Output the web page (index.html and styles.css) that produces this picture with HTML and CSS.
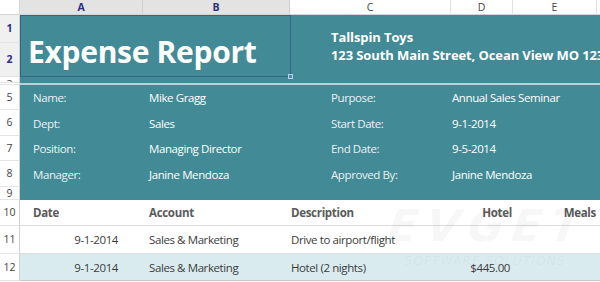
FILE: index.html
```html
<!DOCTYPE html>
<html>
<head>
<meta charset="utf-8">
<link rel="stylesheet" href="styles.css">
</head>
<body>
<div class="sheet">
  <div class="corner"></div>
  <div class="colh sel">A</div>
  <div class="colh sel">B</div>
  <div class="colh">C</div>
  <div class="colh">D</div>
  <div class="colh">E</div>
  <div class="colh end"></div>

  <div class="rowh sel r1">1</div>
  <div class="rowh sel r2">2</div>
  <div class="rowh r3"><span class="cut">3</span></div>
  <div class="rowh r4"></div>
  <div class="rowh r5">5</div>
  <div class="rowh r6">6</div>
  <div class="rowh r7">7</div>
  <div class="rowh r8">8</div>
  <div class="rowh r9">9</div>
  <div class="rowh r10">10</div>
  <div class="rowh r11">11</div>
  <div class="rowh r12">12</div>

  <div class="title">Expense Report</div>
  <div class="company">
    <div class="company-name">Tallspin Toys</div>
    <div class="company-addr">123 South Main Street, Ocean View MO 12345</div>
  </div>
  <div class="selection"><span class="handle"></span></div>

  <div class="band r3"></div>
  <div class="hidden-row"></div>

  <div class="info r5 lab">Name:</div>
  <div class="info r5 val">Mike Gragg</div>
  <div class="info r5 lab2">Purpose:</div>
  <div class="info r5 val2">Annual Sales Seminar</div>

  <div class="info r6 lab">Dept:</div>
  <div class="info r6 val">Sales</div>
  <div class="info r6 lab2">Start Date:</div>
  <div class="info r6 val2">9-1-2014</div>

  <div class="info r7 lab">Position:</div>
  <div class="info r7 val">Managing Director</div>
  <div class="info r7 lab2">End Date:</div>
  <div class="info r7 val2">9-5-2014</div>

  <div class="info r8 lab">Manager:</div>
  <div class="info r8 val">Janine Mendoza</div>
  <div class="info r8 lab2">Approved By:</div>
  <div class="info r8 val2">Janine Mendoza</div>

  <div class="band r9"></div>

  <div class="cell th r10 ca">Date</div>
  <div class="cell th r10 cb">Account</div>
  <div class="cell th r10 cc">Description</div>
  <div class="cell th r10 cd num">Hotel</div>
  <div class="cell th r10 ce num">Meals</div>
  <div class="cell th r10 cf"></div>

  <div class="cell r11 ca num date">9-1-2014</div>
  <div class="cell r11 cb">Sales &amp; Marketing</div>
  <div class="cell r11 cc">Drive to airport/flight</div>
  <div class="cell r11 cd num"></div>
  <div class="cell r11 ce num"></div>
  <div class="cell r11 cf"></div>

  <div class="cell alt r12 ca num date">9-1-2014</div>
  <div class="cell alt r12 cb">Sales &amp; Marketing</div>
  <div class="cell alt r12 cc">Hotel (2 nights)</div>
  <div class="cell alt r12 cd num money">$445.00</div>
  <div class="cell alt r12 ce num"></div>
  <div class="cell alt r12 cf"></div>

  <div class="watermark">
    <div class="wm-big">EVGET</div>
    <div class="wm-small">SOFTWARE SOLUTIONS</div>
  </div>
</div>
</body>
</html>
```

FILE: styles.css
```css
html, body {
  margin: 0;
  padding: 0;
  background: #ffffff;
  overflow: hidden;
}

body {
  font-family: "Open Sans", "Noto Sans", sans-serif;
  width: 600px;
  height: 282px;
}

.sheet {
  position: relative;
  display: grid;
  grid-template-columns: 20px 123px 147px 161px 62px 84px 3px;
  grid-template-rows: 15px 28px 34px 6px 2px 25px 26px 25px 26px 13px 26px 28px 27px;
  width: 600px;
  height: 282px;
  background: #ffffff;
}

.corner {
  grid-row: 1;
  grid-column: 1;
  background: #ffffff;
  border-right: 1px solid #d6d6d6;
  border-bottom: 1px solid #d6d6d6;
}

.colh {
  grid-row: 1;
  display: flex;
  align-items: center;
  justify-content: center;
  font-size: 10.5px;
  color: #444444;
  background: #ffffff;
  border-right: 1px solid #e2e2e2;
  border-bottom: 1px solid #d4d4d4;
  box-sizing: border-box;
  line-height: 1;
}

.colh.sel {
  background: #e3e3e3;
  color: #2d2f86;
  font-weight: 700;
  border-right-color: #d0d0d0;
}

.colh.end {
  border-right: none;
}

.rowh {
  grid-column: 1;
  display: flex;
  align-items: center;
  justify-content: center;
  font-size: 10.5px;
  color: #444444;
  background: #ffffff;
  border-right: 1px solid #d0d0d0;
  border-bottom: 1px solid #e4e4e4;
  box-sizing: border-box;
  overflow: hidden;
  line-height: 1;
}

.rowh.sel {
  background: #f0f0f0;
  color: #2d2f86;
  font-weight: 700;
}

.rowh.r3 { align-items: flex-start; }
.rowh .cut { margin-top: 2px; }

.r1 { grid-row: 2; }
.r2 { grid-row: 3; }
.r3 { grid-row: 4; }
.r4 { grid-row: 5; }
.r5 { grid-row: 6; }
.r6 { grid-row: 7; }
.r7 { grid-row: 8; }
.r8 { grid-row: 9; }
.r9 { grid-row: 10; }
.r10 { grid-row: 11; }
.r11 { grid-row: 12; }
.r12 { grid-row: 13; }

.title {
  grid-row: 2 / 4;
  grid-column: 2 / 4;
  background: #428a96;
  color: #ffffff;
  font-weight: 700;
  font-size: 30px;
  display: flex;
  align-items: flex-end;
  padding: 0 0 10px 8px;
  line-height: 1;
  letter-spacing: -0.3px;
}

.company {
  grid-row: 2 / 4;
  grid-column: 4 / 8;
  background: #428a96;
  color: #ffffff;
  font-weight: 700;
  font-size: 13px;
  line-height: 17.5px;
  padding: 14px 0 0 41px;
  white-space: nowrap;
  overflow: hidden;
  letter-spacing: -0.1px;
}

.selection {
  grid-row: 2 / 4;
  grid-column: 2 / 4;
  border: 1.5px solid #33648d;
  position: relative;
  box-sizing: border-box;
  margin-right: -1px;
}

.handle {
  position: absolute;
  right: -3px;
  bottom: -3px;
  width: 3px;
  height: 3px;
  background: #4f86b3;
  border: 1px solid #b9d3e3;
}

.band {
  grid-column: 2 / 8;
  background: #428a96;
}

.hidden-row {
  grid-row: 5;
  grid-column: 2 / 8;
  background: #b7d2d8;
}

.info {
  background: #428a96;
  color: #ffffff;
  font-size: 11.5px;
  letter-spacing: -0.4px;
  display: flex;
  align-items: center;
  white-space: nowrap;
}

.info.lab {
  grid-column: 2;
  padding-left: 13px;
  color: #eaf2f4;
}

.info.val {
  grid-column: 3;
  padding-left: 6px;
}

.info.lab2 {
  grid-column: 4;
  padding-left: 41px;
  color: #eaf2f4;
}

.info.val2 {
  grid-column: 5 / 8;
  padding-left: 1px;
}

.cell {
  display: flex;
  align-items: center;
  font-size: 11.5px;
  letter-spacing: -0.4px;
  color: #3c3c3c;
  background: #ffffff;
  border-bottom: 1px solid #dcdcdc;
  white-space: nowrap;
  box-sizing: border-box;
  overflow: visible;
}

.cell.alt {
  background: #daebef;
  border-bottom-color: #c8c8c8;
}

.cell.th {
  font-weight: 700;
  color: #5a5a5a;
  letter-spacing: -0.3px;
}

.ca { grid-column: 2; padding-left: 13px; }
.cb { grid-column: 3; padding-left: 6px; }
.cc { grid-column: 4; padding-left: 1px; }
.cd { grid-column: 5; }
.ce { grid-column: 6; }
.cf { grid-column: 7; }

.cell.num {
  justify-content: flex-end;
  padding-right: 1px;
}

.cell.date {
  padding-right: 25px;
  padding-left: 0;
}

.cell.money {
  padding-right: 3px;
}

.watermark {
  position: absolute;
  left: 388px;
  top: 204px;
  width: 194px;
  pointer-events: none;
  text-align: center;
  font-family: "DejaVu Sans", sans-serif;
  font-style: italic;
  color: rgba(0, 0, 0, 0.045);
  white-space: nowrap;
}

.wm-big {
  font-size: 44px;
  font-weight: 700;
  letter-spacing: 8px;
  line-height: 44px;
  transform: skewX(-8deg);
}

.wm-small {
  font-size: 13px;
  letter-spacing: 1px;
  line-height: 18px;
  margin-top: 4px;
  transform: scaleX(0.95);
}
```
